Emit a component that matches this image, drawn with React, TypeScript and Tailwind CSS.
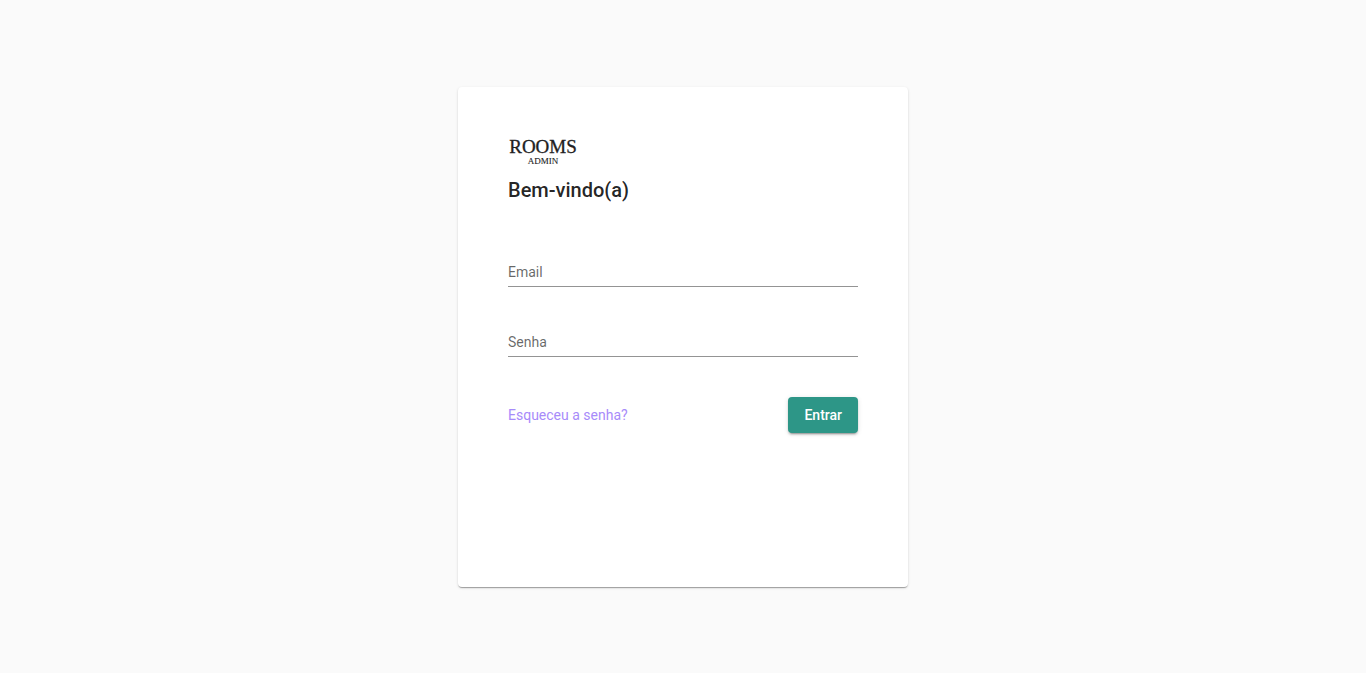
type FieldProps = { id: string; label: string; type: string };

function Field({ id, label, type }: FieldProps) {
  return (
    <div className="grid h-8 items-stretch border-b border-black/42">
      <input id={id} type={type} placeholder=" " className="peer col-start-1 row-start-1 w-full bg-transparent pt-1 outline-none" />
      <label htmlFor={id} className="pointer-events-none col-start-1 row-start-1 self-center pt-1 text-black/60 peer-focus:invisible peer-[:not(:placeholder-shown)]:invisible">
        {label}
      </label>
    </div>
  );
}

export default function App() {
  return (
    <main className="flex min-h-screen items-center justify-center bg-[#fafafa] font-['Roboto',sans-serif] text-black/87">
      <section className="min-h-[500px] w-full max-w-[450px] rounded bg-white p-[50px] shadow-[0_2px_1px_-1px_rgba(0,0,0,0.2),0_1px_1px_0_rgba(0,0,0,0.14),0_1px_3px_0_rgba(0,0,0,0.12)]">
        <svg width="70" height="30" viewBox="0 0 70 30" role="img" aria-label="Rooms Admin" className="block fill-[#212121] font-['Liberation_Serif',serif]">
          <text x="35" y="16" textAnchor="middle" fontSize="19" stroke="#212121" strokeWidth="0.3">ROOMS</text>
          <text x="35" y="27" textAnchor="middle" fontSize="9" stroke="#212121" strokeWidth="0.1">ADMIN</text>
        </svg>
        <h1 className="mt-2 text-xl leading-[30px] font-medium">Bem-vindo(a)</h1>
        <form className="mt-[50px] text-sm" onSubmit={(e) => e.preventDefault()}>
          <div className="grid gap-[38px]">
            <Field id="email" label="Email" type="email" />
            <Field id="password" label="Senha" type="password" />
          </div>
          <div className="mt-10 flex items-center justify-between">
            <a href="#recuperar" className="text-[#a78bfa]">Esqueceu a senha?</a>
            <button type="submit" className="h-9 rounded bg-[#2d9687] px-4 font-medium text-white shadow-[0_3px_1px_-2px_rgba(0,0,0,0.2),0_2px_2px_0_rgba(0,0,0,0.14),0_1px_5px_0_rgba(0,0,0,0.12)]">Entrar</button>
          </div>
        </form>
      </section>
    </main>
  );
}
